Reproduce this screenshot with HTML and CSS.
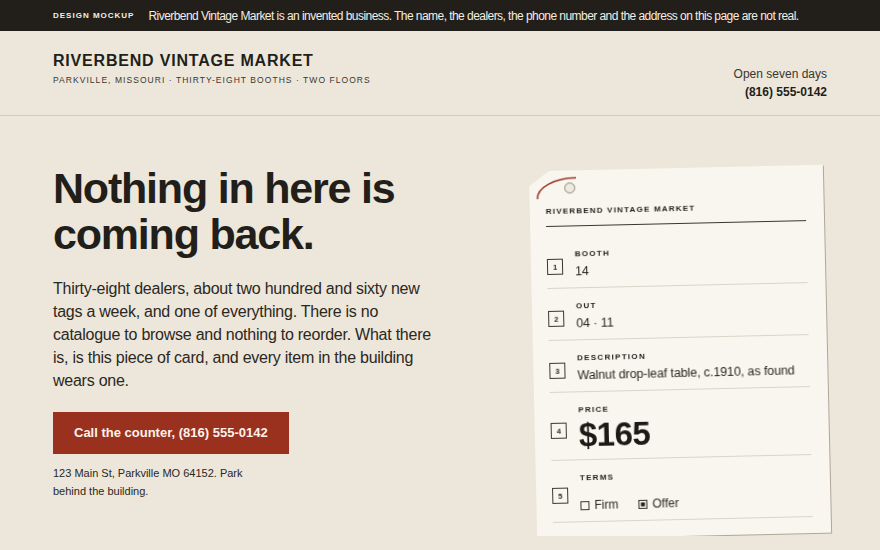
FILE: index.html
```html
<!DOCTYPE html>
<html lang="en">
<head>
    <meta charset="UTF-8">
    <meta name="viewport" content="width=device-width, initial-scale=1.0">
    <title>Riverbend Vintage Market</title>
    <link rel="stylesheet" href="styles.css">
</head>
<body>
    <div class="notice">
        <span class="notice-tag">DESIGN MOCKUP</span>
        <span class="notice-text">Riverbend Vintage Market is an invented business. The name, the dealers, the phone number and the address on this page are not real.</span>
    </div>

    <header class="top">
        <div class="brand">
            <div class="brand-name">RIVERBEND VINTAGE MARKET</div>
            <div class="brand-sub">PARKVILLE, MISSOURI · THIRTY-EIGHT BOOTHS · TWO FLOORS</div>
        </div>
        <div class="hours">
            <div>Open seven days</div>
            <div class="hours-phone">(816) 555-0142</div>
        </div>
    </header>

    <main class="hero">
        <div class="hero-text">
            <h1>Nothing in here is coming back.</h1>
            <p class="lead">Thirty-eight dealers, about two hundred and sixty new tags a week, and one of everything. There is no catalogue to browse and nothing to reorder. What there is, is this piece of card, and every item in the building wears one.</p>
            <a class="call" href="#">Call the counter, (816) 555-0142</a>
            <p class="address">123 Main St, Parkville MO 64152. Park behind the building.</p>
        </div>

        <div class="tag-wrap">
            <div class="tag">
                <div class="tag-title">RIVERBEND VINTAGE MARKET</div>

                <div class="field">
                    <span class="num">1</span>
                    <div>
                        <div class="label">BOOTH</div>
                        <div class="value">14</div>
                    </div>
                </div>
                <div class="field">
                    <span class="num">2</span>
                    <div>
                        <div class="label">OUT</div>
                        <div class="value">04 · 11</div>
                    </div>
                </div>
                <div class="field">
                    <span class="num">3</span>
                    <div>
                        <div class="label">DESCRIPTION</div>
                        <div class="value">Walnut drop-leaf table, c.1910, as found</div>
                    </div>
                </div>
                <div class="field">
                    <span class="num">4</span>
                    <div>
                        <div class="label">PRICE</div>
                        <div class="value price">$165</div>
                    </div>
                </div>
                <div class="field">
                    <span class="num">5</span>
                    <div>
                        <div class="label">TERMS</div>
                        <div class="terms">
                            <span class="check"><span class="box"></span>Firm</span>
                            <span class="check"><span class="box on"></span>Offer</span>
                        </div>
                    </div>
                </div>
            </div>
            <svg class="string" width="42" height="24" viewBox="0 0 42 24">
                <path d="M1 22 A 38 20 0 0 1 40 1.5" fill="none" stroke="#9a3426" stroke-width="1.5"/>
            </svg>
            <span class="hole"></span>
        </div>
    </main>
</body>
</html>
```

FILE: styles.css
```css
body{
    margin: 0;
    background: #ede6da;
    color: #221f1a;
    font-family: "Liberation Sans", Arial, sans-serif;
}

.notice{
    background: #221f1a;
    color: #f3eee4;
    height: 31px;
    padding: 0 53px;
    display: flex;
    align-items: center;
    gap: 14px;
    white-space: nowrap;
}

.notice-tag{
    font-size: 8px;
    font-weight: bold;
    letter-spacing: 1px;
    flex-shrink: 0;
}

.notice-text{
    font-size: 12px;
    letter-spacing: -0.55px;
}

.top{
    display: flex;
    justify-content: space-between;
    align-items: flex-end;
    height: 85px;
    box-sizing: border-box;
    padding: 20px 53px 14px;
    border-bottom: 1px solid #d3cbbd;
}

.brand{
    align-self: flex-start;
}

.brand-name{
    font-size: 16px;
    line-height: 20px;
    font-weight: bold;
    letter-spacing: 0.8px;
}

.brand-sub{
    margin-top: 3px;
    font-size: 8.5px;
    line-height: 12px;
    letter-spacing: 1.05px;
    color: #3a362f;
}

.hours{
    text-align: right;
    font-size: 12px;
    line-height: 18px;
    color: #3a362f;
}

.hours-phone{
    font-weight: bold;
    color: #221f1a;
}

.hero{
    display: grid;
    grid-template-columns: 1fr 294px;
    padding: 49px 53px 0;
}

h1{
    margin: 0;
    font-size: 43px;
    line-height: 46px;
    letter-spacing: -1.2px;
    max-width: 390px;
}

.lead{
    margin: 20px 0 0;
    max-width: 386px;
    font-size: 16px;
    line-height: 23px;
    letter-spacing: -0.25px;
    color: #2b2822;
}

.call{
    display: inline-block;
    margin-top: 20px;
    background: #9a311f;
    color: #fbf3ea;
    text-decoration: none;
    font-size: 13px;
    font-weight: bold;
    line-height: 42px;
    padding: 0 21px;
}

.address{
    margin: 10px 0 0;
    max-width: 200px;
    font-size: 11px;
    line-height: 18px;
    color: #2b2822;
}

.tag-wrap{
    position: relative;
    align-self: start;
    margin-top: 3px;
    transform: rotate(-1.3deg);
    filter: drop-shadow(1px 1px 0.5px rgba(60, 50, 35, 0.35));
}

.tag{
    background: #f8f6ee;
    clip-path: polygon(20px 0, 100% 0, 100% 100%, 0 100%, 0 15px);
    padding: 35px 18px 18px 16px;
    height: 368px;
    box-sizing: border-box;
}

.tag-title{
    font-size: 8px;
    line-height: 12px;
    font-weight: bold;
    letter-spacing: 1.2px;
    padding-bottom: 8px;
    border-bottom: 1.5px solid #3a362f;
    margin-bottom: 10px;
}

.field{
    display: flex;
    align-items: center;
    gap: 12px;
    padding: 12px 0 7px;
    border-bottom: 1px solid #d9d4c8;
}

.num{
    width: 14px;
    height: 14px;
    border: 1px solid #3a362f;
    font-size: 7.5px;
    font-weight: bold;
    display: flex;
    align-items: center;
    justify-content: center;
    flex-shrink: 0;
    margin-top: 4px;
}

.label{
    font-size: 8px;
    line-height: 12px;
    font-weight: bold;
    letter-spacing: 1.3px;
}

.value{
    margin-top: 2px;
    font-size: 12.5px;
    line-height: 18px;
    letter-spacing: -0.1px;
    color: #2b2822;
}

.price{
    font-size: 33px;
    line-height: 34px;
    font-weight: bold;
    letter-spacing: -0.5px;
    color: #1c1a16;
}

.terms{
    display: flex;
    gap: 20px;
    margin-top: 12px;
    font-size: 12px;
    line-height: 18px;
    color: #2b2822;
}

.check{
    display: flex;
    align-items: center;
    gap: 5px;
}

.box{
    width: 9px;
    height: 9px;
    border: 1px solid #3a362f;
    box-sizing: border-box;
}

.box.on{
    background: #221f1a;
    box-shadow: inset 0 0 0 1.5px #f8f6ee;
}

.string{
    position: absolute;
    left: 7px;
    top: 6px;
}

.hole{
    position: absolute;
    left: 35px;
    top: 12px;
    width: 9px;
    height: 9px;
    border-radius: 50%;
    border: 1px solid #8a857b;
    background: #efebe1;
}
```
